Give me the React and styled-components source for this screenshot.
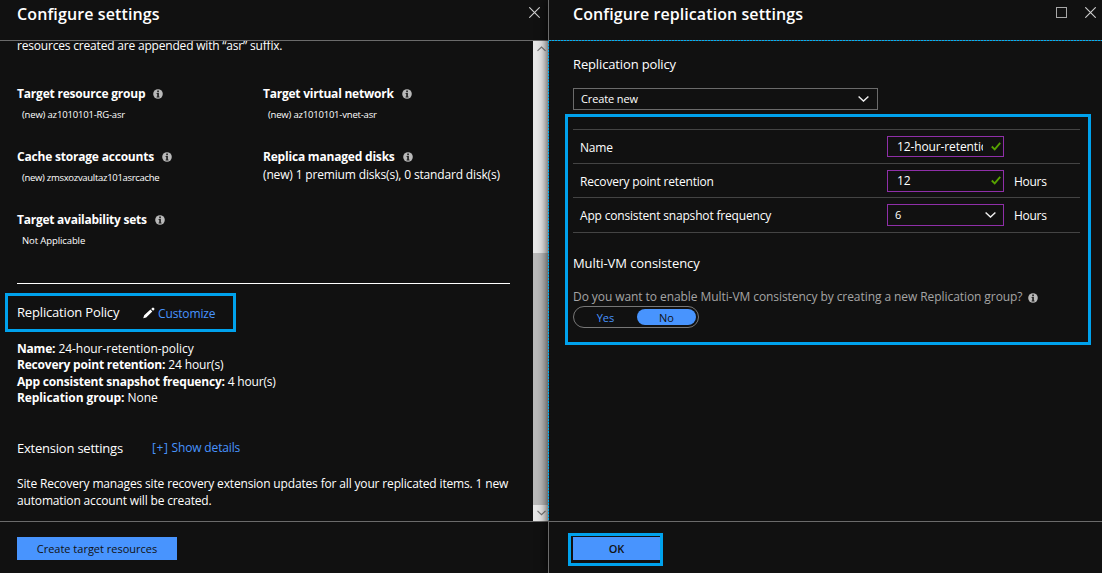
import React from "react";
import styled, { createGlobalStyle, css } from "styled-components";

const Global = createGlobalStyle`
  * { box-sizing: border-box; }
  body { margin: 0; background: #111; overflow: hidden; }
`;

const ACCENT = "#00a2ed";
const dashes = (dir) => `repeating-linear-gradient(${dir}, #00b0f5 0 2px, #59666c 2px 3px)`;

const Screen = styled.div`
  width: 1102px;
  height: 573px;
  display: flex;
  background: #111;
  color: #fff;
  font-family: "Open Sans", "Noto Sans", sans-serif;
  font-size: 12px;
  line-height: 16px;
  white-space: nowrap;
`;
const Blade = styled.section`
  width: ${(p) => p.$width}px;
  display: flex;
  flex-direction: column;
`;
const FrontBlade = styled.div`
  position: relative;
  width: 554px;
  display: flex;
  background: #111;
  box-shadow: 0 0 10px rgba(0, 0, 0, 0.85);
`;
const Header = styled.header`
  height: 40px;
  flex: none;
  display: flex;
  align-items: flex-start;
  justify-content: space-between;
  padding: 3px ${(p) => p.$right}px 0 ${(p) => p.$left}px;
`;
const Title = styled.h1`
  margin: 0;
  font-size: 16px;
  font-weight: 600;
  line-height: 22px;
  letter-spacing: ${(p) => p.$track || 0}px;
`;
const Controls = styled.div`
  display: flex;
  gap: 18px;
  padding-top: 4px;
`;
const Rule = styled.div`
  height: 1px;
  flex: none;
  background: ${(p) => (p.$focus ? dashes("90deg") : "#6b6b6b")};
`;
const Body = styled.div`
  height: 480px;
  flex: none;
  display: flex;
  overflow: hidden;
`;
const Scroll = styled.div`
  flex: 1;
  padding-left: 17px;
`;
const Edge = styled.div`
  height: ${(p) => p.$height}px;
  background: ${(p) => (p.$focus ? dashes("180deg") : "#6b6b6b")};
`;
const EdgeColumn = styled.div`
  width: 1px;
  flex: none;
`;
const Footer = styled.footer`
  flex: 1;
  padding: ${(p) => p.$pad};
`;
const Button = styled.button`
  display: block;
  width: ${(p) => p.$width}px;
  height: 23px;
  padding: 0;
  border: 0;
  background: #4894fe;
  color: #111;
  font: ${(p) => (p.$strong ? 600 : 400)} 11px/23px "Open Sans", sans-serif;
`;
const Highlight = styled.div`
  border: 3px solid ${ACCENT};
`;

const Intro = styled.p`
  margin: -3px 0 32px;
  letter-spacing: -0.19px;
`;
const Targets = styled.div`
  display: grid;
  grid-template-columns: 246px 270px;
  grid-auto-rows: 63px;
`;
const TargetTitle = styled.div`
  height: 16px;
  display: flex;
  align-items: center;
  gap: 8px;
  font-weight: 700;
  line-height: 15px;
  letter-spacing: ${(p) => p.$track || -0.2}px;
  span { margin-top: -1px; }
`;
const TargetValue = styled.div`
  ${(p) => p.$large
    ? css`padding-top: 2px;`
    : css`padding: 5px 0 0 5px; font-size: 9.5px;`}
  letter-spacing: ${(p) => p.$track}px;
`;
const Divider = styled.div`
  width: 493px;
  height: 1px;
  margin-top: 8px;
  background: #fff;
`;
const PolicyHeading = styled(Highlight)`
  width: 231px;
  height: 39px;
  margin: 9px 0 9px -12px;
  padding-left: 9px;
  display: flex;
  align-items: center;
  gap: 3px;
  a { padding-top: 3px; }
  > div { padding-bottom: 1px; }
`;
const Subhead = styled.div`
  font-size: 13px;
  line-height: 18px;
  letter-spacing: ${(p) => p.$track || 0}px;
  width: ${(p) => p.$width || "auto"};
`;
const Link = styled.a`
  color: #4894fe;
  letter-spacing: -0.14px;
`;
const Expander = styled.span`
  letter-spacing: 0.6px;
`;
const Summary = styled.div`
  line-height: 16.33px;
`;
const Fact = styled.div`
  letter-spacing: ${(p) => p.$track}px;
  b { letter-spacing: ${(p) => p.$nameTrack || -0.2}px; }
`;
const Extension = styled.div`
  display: flex;
  align-items: center;
  height: 18px;
  margin-top: 33px;
`;
const Note = styled.p`
  margin: 18px 0 0;
  line-height: 17px;
  letter-spacing: -0.158px;
`;

const Scrollbar = styled.div`
  width: 15px;
  display: flex;
  flex-direction: column;
  background: #e8e8e8;
`;
const ScrollArrow = styled.div`
  height: 16px;
  display: flex;
  align-items: center;
  justify-content: center;
  padding-left: 1px;
`;
const Thumb = styled.div`
  height: 252px;
  margin-top: 196px;
  background: #bababa;
`;

const Form = styled.div`
  height: 480px;
  flex: none;
  padding: 14px 0 0 24px;
`;
const Select = styled.div`
  width: ${(p) => p.$width}px;
  height: 22px;
  display: flex;
  align-items: center;
  justify-content: space-between;
  padding: 0 7px;
  border: 1px solid ${(p) => (p.$edited ? "#8f2fa8" : "#6b6b6b")};
  font-size: 11px;
  letter-spacing: -0.12px;
`;
const PolicySelect = styled(Select)`
  margin-top: 15px;
  padding-right: 8px;
`;
const Options = styled(Highlight)`
  width: 526px;
  height: 231px;
  margin: 4px 0 0 -8px;
  padding: 12px 0 0 5px;
`;
const Row = styled.div`
  width: 507px;
  height: ${(p) => p.$height}px;
  display: grid;
  grid-template-columns: 307px 117px auto;
  align-items: center;
  padding-left: 7px;
  border-top: 1px solid #444;
  &:nth-child(3) { border-bottom: 1px solid #444; }
`;
const RowText = styled.span`
  letter-spacing: -0.18px;
  padding-top: 2px;
`;
const Unit = styled(RowText)`
  padding-left: 10px;
  letter-spacing: -0.3px;
`;
const Input = styled.div`
  width: 117px;
  height: ${(p) => p.$height || 22}px;
  display: flex;
  align-items: center;
  padding-left: 9px;
  border: 1px solid #8f2fa8;
`;
const InputText = styled.span`
  width: 86px;
  margin-right: 8px;
  overflow: hidden;
  line-height: 18px;
  letter-spacing: -0.12px;
`;
const Consistency = styled.div`
  padding-top: 21px;
`;
const Question = styled.div`
  display: flex;
  align-items: center;
  gap: 6px;
  margin-top: 17px;
  color: #a5a5a5;
  letter-spacing: -0.072px;
  svg { margin-top: 1px; }
`;
const Toggle = styled.div`
  width: 126px;
  height: 22px;
  margin-top: 1px;
  display: flex;
  padding: 2px;
  border: 1px solid #777;
  border-radius: 11px;
`;
const Choice = styled.div`
  width: ${(p) => (p.$on ? 59 : 61)}px;
  height: 16px;
  padding-right: ${(p) => (p.$on ? 0 : 2)}px;
  border-radius: 8px;
  text-align: center;
  line-height: 17px;
  font-size: 11px;
  color: ${(p) => (p.$on ? "#111" : "#4894fe")};
  background: ${(p) => (p.$on ? "#4894fe" : "transparent")};
`;
const OkFrame = styled(Highlight)`
  width: 95px;
  height: 33px;
  padding: 1px 2px 2px;
`;

const InfoIcon = () => (
  <svg width="10" height="10" viewBox="0 0 10 10">
    <circle cx="5" cy="5" r="4.8" fill="#b9b9b9" />
    <path d="M4.2 1.6h1.7v1.6H4.2zM3.6 4.1h2.3v3.4h.6v.9H3.6v-.9h.6V5h-.6z" fill="#222" />
  </svg>
);
const CloseIcon = () => (
  <svg width="11" height="11" viewBox="0 0 11 11">
    <path d="M.3.3 10.700 10.700M10.700.3.3 10.700" stroke="#d0d0d0" strokeWidth="1.1" />
  </svg>
);
const MaximizeIcon = () => (
  <svg width="11" height="11" viewBox="0 0 11 11">
    <rect x=".5" y=".5" width="10" height="10" fill="none" stroke="#a8a8a8" />
  </svg>
);
const Chevron = ({ up, color = "#eee", width = 11 }) => (
  <svg width={width} height="6" viewBox="0 0 11 6">
    <path d={up ? "M.6 5.3 5.5.7l4.9 4.6" : "M.6.5l4.9 4.6L10.4.5"} fill="none" stroke={color} strokeWidth="1.4" />
  </svg>
);
const CheckIcon = () => (
  <svg width="10" height="9" viewBox="0 0 10 9">
    <path d="M.8 4.5 3.7 7.4 9.2.9" fill="none" stroke="#57a300" strokeWidth="1.8" />
  </svg>
);
const PencilIcon = () => (
  <svg width="12" height="12" viewBox="0 0 12 12">
    <path d="M.2 11.300 1.200 8.300 7.400 2.600 9.300 4.600 3.200 10.400zM8.200 1.900 9.500.7Q10 .2 10.500.7L11.300 1.500Q11.800 2 11.300 2.500L10.100 3.800z" fill="#fff" />
  </svg>
);

const targets = [
  { title: "Target resource group", value: "(new) az1010101-RG-asr", valueTrack: -0.18 },
  { title: "Target virtual network", value: "(new) az1010101-vnet-asr", track: -0.23, valueTrack: -0.2 },
  { title: "Cache storage accounts", value: "(new) zmsxozvaultaz101asrcache", valueTrack: -0.3 },
  { title: "Replica managed disks", value: "(new) 1 premium disks(s), 0 standard disk(s)", valueTrack: -0.16, large: true },
  { title: "Target availability sets", value: "Not Applicable", track: -0.25, valueTrack: -0.1 },
];
const facts = [
  { name: "Name:", value: "24-hour-retention-policy", track: -0.05 },
  { name: "Recovery point retention:", value: "24 hour(s)", track: -0.12 },
  { name: "App consistent snapshot frequency:", value: "4 hour(s)", track: -0.18 },
  { name: "Replication group:", value: "None", nameTrack: -0.1, track: -0.05 },
];

function ConfigureSettings() {
  return (
    <Blade $width={548}>
      <Header $left={17} $right={8}>
        <Title $track={0.12}>Configure settings</Title>
        <Controls><CloseIcon /></Controls>
      </Header>
      <Rule />
      <Body>
        <Scroll>
          <Intro>resources created are appended with “asr” suffix.</Intro>
          <Targets>
            {targets.map((t) => (
              <div key={t.title}>
                <TargetTitle $track={t.track}><span>{t.title}</span><InfoIcon /></TargetTitle>
                <TargetValue $large={t.large} $track={t.valueTrack}>{t.value}</TargetValue>
              </div>
            ))}
          </Targets>
          <Divider />
          <PolicyHeading>
            <Subhead $width="123px" $track={-0.17}>Replication Policy</Subhead>
            <PencilIcon />
            <Link>Customize</Link>
          </PolicyHeading>
          <Summary>
            {facts.map((f) => (
              <Fact key={f.name} $track={f.track} $nameTrack={f.nameTrack}><b>{f.name}</b> {f.value}</Fact>
            ))}
          </Summary>
          <Extension>
            <Subhead $width="135px" $track={-0.22}>Extension settings</Subhead>
            <Link><Expander>[+]</Expander> Show details</Link>
          </Extension>
          <Note>
            Site Recovery manages site recovery extension updates for all your replicated items. 1 new
            <br />
            automation account will be created.
          </Note>
        </Scroll>
        <Scrollbar>
          <ScrollArrow><Chevron up color="#777" width={9} /></ScrollArrow>
          <Thumb />
          <ScrollArrow><Chevron color="#777" width={9} /></ScrollArrow>
        </Scrollbar>
      </Body>
      <Rule />
      <Footer $pad="15px 17px">
        <Button $width={160}>Create target resources</Button>
      </Footer>
    </Blade>
  );
}

function ReplicationSettings() {
  return (
    <FrontBlade>
      <EdgeColumn>
        <Edge $height={41} />
        <Edge $height={480} $focus />
        <Edge $height={52} />
      </EdgeColumn>
      <Blade $width={553}>
        <Header $left={24} $right={6}>
          <Title $track={0.08}>Configure replication settings</Title>
          <Controls><MaximizeIcon /><CloseIcon /></Controls>
        </Header>
        <Rule $focus />
        <Form>
          <Subhead $track={-0.14}>Replication policy</Subhead>
          <PolicySelect $width={305}>Create new<Chevron /></PolicySelect>
          <Options>
            <Row $height={34}>
              <RowText>Name</RowText>
              <Input $height={21}><InputText>12-hour-retention-policy</InputText><CheckIcon /></Input>
            </Row>
            <Row $height={34}>
              <RowText>Recovery point retention</RowText>
              <Input><InputText>12</InputText><CheckIcon /></Input>
              <Unit>Hours</Unit>
            </Row>
            <Row $height={36}>
              <RowText>App consistent snapshot frequency</RowText>
              <Select $width={117} $edited>6<Chevron /></Select>
              <Unit>Hours</Unit>
            </Row>
            <Consistency>
              <Subhead $track={-0.08}>Multi-VM consistency</Subhead>
              <Question>
                Do you want to enable Multi-VM consistency by creating a new Replication group?
                <InfoIcon />
              </Question>
              <Toggle>
                <Choice>Yes</Choice>
                <Choice $on>No</Choice>
              </Toggle>
            </Consistency>
          </Options>
        </Form>
        <Rule />
        <Footer $pad="11px 0 0 19px">
          <OkFrame><Button $width={87} $strong>OK</Button></OkFrame>
        </Footer>
      </Blade>
    </FrontBlade>
  );
}

export default function App() {
  return (
    <>
      <Global />
      <Screen>
        <ConfigureSettings />
        <ReplicationSettings />
      </Screen>
    </>
  );
}
